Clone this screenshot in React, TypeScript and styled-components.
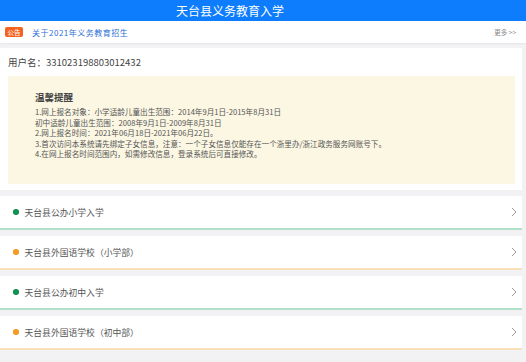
import React from "react";
import styled, { createGlobalStyle } from "styled-components";

const Global = createGlobalStyle`
  html, body { margin: 0; padding: 0; background: #f2f2f4; }
  body { font-family: "Noto Sans CJK SC", "Noto Sans", sans-serif; width: 526px; height: 362px; overflow: hidden; }
`;

const Page = styled.div`
  display: flex;
  flex-direction: column;
  width: 526px;
`;

const Header = styled.header`
  height: 21px;
  background: #0d7dfd;
  color: #fff;
  font-size: 12px;
  display: flex;
  align-items: center;
  padding-left: 176px;
`;

const NoticeBar = styled.div`
  height: 22px;
  background: #fff;
  display: flex;
  align-items: center;
  padding: 0 10px 0 5px;
  box-shadow: 0 1px 2px rgba(0,0,0,0.05);
`;

const Badge = styled.span`
  background: #f4621f;
  color: #fff;
  font-size: 6.5px;
  line-height: 10px;
  padding: 0 2.5px;
  border-radius: 2px;
`;

const NoticeText = styled.span`
  margin-left: 9px;
  font-size: 8px;
  color: #2c6fd6;
  flex: 1;
  letter-spacing: 0.5px;
`;

const More = styled.span`
  font-size: 6.5px;
  color: #888;
`;

const Body = styled.div`
  display: flex;
  flex-direction: column;
  gap: 6px;
  padding: 5px 4px 0 0;
`;

const Card = styled.section`
  background: #fff;
  padding: 7px 7px 6px 8px;
  display: flex;
  flex-direction: column;
  gap: 7px;
`;

const User = styled.div`
  font-size: 9.5px;
  color: #444;
  line-height: 14px;
`;

const Tips = styled.div`
  background: #fbf7e3;
  height: 108px;
  box-sizing: border-box;
  padding: 15px 20px 0 27px;
  color: #555;
`;

const TipsTitle = styled.div`
  font-size: 9.5px;
  font-weight: bold;
  color: #444;
  line-height: 13px;
  margin-bottom: 3px;
`;

const TipLine = styled.div`
  font-size: 7.6px;
  line-height: 10.5px;
  white-space: nowrap;
`;

const Item = styled.div<{ $c: string; $line: string }>`
  height: 32px;
  background: #fff;
  border-bottom: 2px solid ${(p) => p.$line};
  display: flex;
  align-items: center;
  padding: 0 5px 0 13px;
  font-size: 8.8px;
  color: #555;
  &::before {
    content: "";
    width: 5.5px;
    height: 5.5px;
    border-radius: 50%;
    background: ${(p) => p.$c};
    margin-right: 6px;
  }
`;

const ItemText = styled.span`
  flex: 1;
`;

const Chevron = () => (
  <svg width="6" height="10" viewBox="0 0 6 10">
    <path d="M1 1 L5 5 L1 9" fill="none" stroke="#999" strokeWidth="1" />
  </svg>
);

const items = [
  { t: "天台县公办小学入学", c: "#11924f", l: "#b3e0cb" },
  { t: "天台县外国语学校（小学部）", c: "#f59a23", l: "#f8e0b8" },
  { t: "天台县公办初中入学", c: "#11924f", l: "#b3e0cb" },
  { t: "天台县外国语学校（初中部）", c: "#f59a23", l: "#f8e0b8" },
];

export default function App() {
  return (
    <Page>
      <Global />
      <Header>天台县义务教育入学</Header>
      <NoticeBar>
        <Badge>公告</Badge>
        <NoticeText>关于2021年义务教育招生</NoticeText>
        <More>更多 &gt;&gt;</More>
      </NoticeBar>
      <Body>
        <Card>
          <User>用户名：331023198803012432</User>
          <Tips>
            <TipsTitle>温馨提醒</TipsTitle>
            <TipLine>1.网上报名对象：小学适龄儿童出生范围：2014年9月1日-2015年8月31日</TipLine>
            <TipLine>初中适龄儿童出生范围：2008年9月1日-2009年8月31日</TipLine>
            <TipLine>2.网上报名时间：2021年06月18日-2021年06月22日。</TipLine>
            <TipLine>3.首次访问本系统请先绑定子女信息，注意：一个子女信息仅能存在一个浙里办/浙江政务服务网账号下。</TipLine>
            <TipLine>4.在网上报名时间范围内，如需修改信息，登录系统后可直接修改。</TipLine>
          </Tips>
        </Card>
        {items.map((it) => (
          <Item key={it.t} $c={it.c} $line={it.l}>
            <ItemText>{it.t}</ItemText>
            <Chevron />
          </Item>
        ))}
      </Body>
    </Page>
  );
}
